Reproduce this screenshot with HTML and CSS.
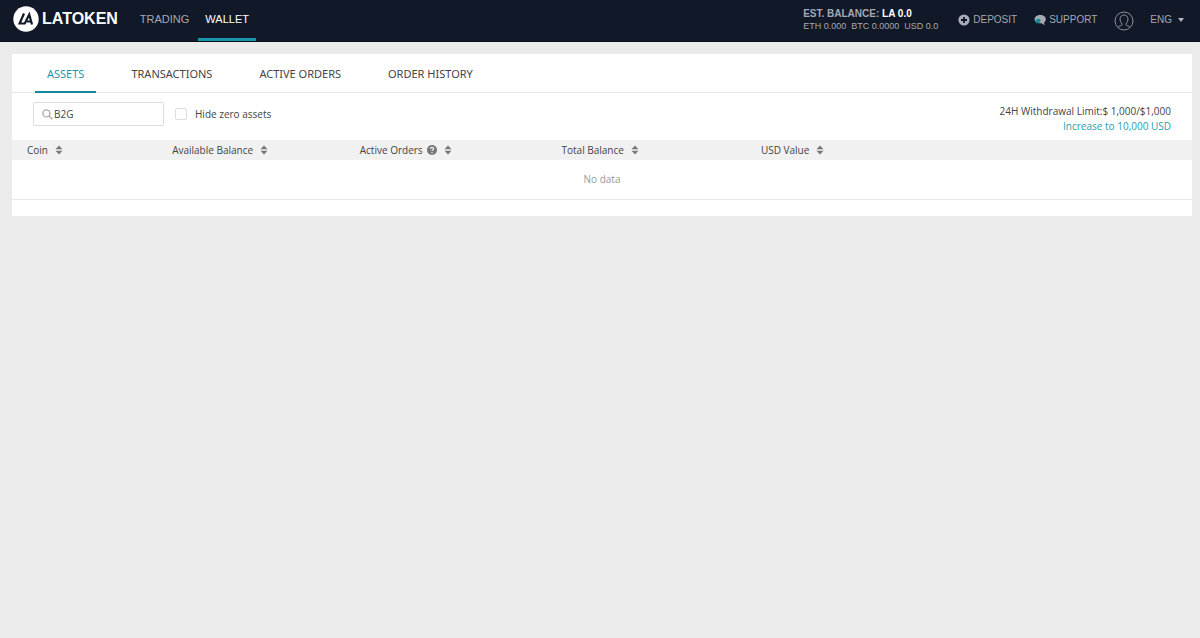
FILE: index.html
```
<!DOCTYPE html>
<html lang="en">

<head>
    <meta charset="UTF-8">
    <meta name="viewport" content="width=device-width, initial-scale=1.0">
    <title>LATOKEN - Wallet</title>
    <link rel="stylesheet" href="styles.css">
</head>

<body>
    <!-- sort arrows, used by every table heading -->
    <svg class="sprite" aria-hidden="true">
        <symbol id="sort" viewBox="0 0 8 10">
            <path d="M4 0.5L7.5 4.3H0.5z M0.5 5.7H7.5L4 9.5z" fill="#777" />
        </symbol>
    </svg>

    <header class="header">
        <a class="logo" href="#">
            <svg width="26" height="26" viewBox="0 0 26 26">
                <circle cx="13" cy="13" r="12.7" fill="#fff" />
                <path d="M11 7.5L6.6 17.5H11.8L16.2 8.5L19 18.5M14 15.5H18" fill="none" stroke="#111827" stroke-width="2.2" />
            </svg>
            <span>LATOKEN</span>
        </a>
        <nav class="nav">
            <a href="#">TRADING</a>
            <a href="#" class="active">WALLET</a>
        </nav>
        <div class="balance">
            <div class="balance-main">EST. BALANCE: <b>LA 0.0</b></div>
            <div class="balance-list"><span>ETH 0.000</span><span>BTC 0.0000</span><span>USD 0.0</span></div>
        </div>
        <a class="header-link deposit" href="#">
            <svg width="12" height="12" viewBox="0 0 12 12">
                <circle cx="6" cy="6" r="5.6" fill="#a9acb7" />
                <path d="M6 3v6M3 6h6" stroke="#111827" stroke-width="1.8" />
            </svg>
            DEPOSIT
        </a>
        <a class="header-link support" href="#">
            <svg width="12" height="12" viewBox="0 0 12 12">
                <path d="M6.2 1C9.5 1 11.8 2.8 11.8 5.2C11.8 6.8 11 8 9.8 8.7L11 11.2L7.4 9.3C3.4 9.7 0.6 7.7 0.6 5.2C0.6 2.8 3 1 6.2 1z" fill="#a9a8b2" />
                <path d="M4.3 4.8a2.3 2.1 0 1 1-1 4L1.6 9.6L2.2 7.9A2.3 2.1 0 0 1 4.3 4.8z" fill="#168b96" />
            </svg>
            SUPPORT
        </a>
        <a class="profile" href="#" aria-label="Profile">
            <svg width="20" height="20" viewBox="0 0 20 20" fill="none" stroke="#8c909b">
                <circle cx="10" cy="10" r="9" />
                <path d="M4 16.2C5 14.6 8.3 15 8.3 13.2C5.2 10.5 5 4 10 4S14.8 10.5 11.7 13.2C11.7 15 15 14.6 16 16.2" />
            </svg>
        </a>
        <button class="lang" type="button">ENG
            <svg width="6" height="4" viewBox="0 0 6 4"><path d="M0 0H6L3 4z" fill="#b5b8c0" /></svg>
        </button>
    </header>

    <main class="wallet">
        <nav class="tabs">
            <a href="#" class="active">ASSETS</a>
            <a href="#">TRANSACTIONS</a>
            <a href="#">ACTIVE ORDERS</a>
            <a href="#">ORDER HISTORY</a>
        </nav>

        <div class="filter">
            <div class="search">
                <svg width="11" height="11" viewBox="0 0 11 11" fill="none" stroke="#aaa" stroke-width="1.4">
                    <circle cx="4.4" cy="4.4" r="3.5" />
                    <path d="M7 7L10.4 10.2" />
                </svg>
                <input type="text" value="B2G" aria-label="Search coin">
            </div>
            <label class="hide-zero"><input type="checkbox"> Hide zero assets</label>
            <div class="limit">
                <div>24H Withdrawal Limit:$ 1,000/$1,000</div>
                <a href="#">Increase to 10,000 USD</a>
            </div>
        </div>

        <table class="assets">
            <colgroup>
                <col class="col-coin">
                <col class="col-available">
                <col class="col-orders">
                <col class="col-total">
                <col>
            </colgroup>
            <thead>
                <tr>
                    <th>Coin <svg class="sort"><use href="#sort" /></svg></th>
                    <th>Available Balance <svg class="sort"><use href="#sort" /></svg></th>
                    <th>Active Orders
                        <svg class="help" viewBox="0 0 10 10">
                            <circle cx="5" cy="5" r="5" fill="#777" />
                            <path d="M3.4 3.9C3.4 1.9 6.7 2 6.6 3.9C6.5 4.9 5 4.8 5 6M5 7V8.2" fill="none" stroke="#f1f1f1" stroke-width="1.2" />
                        </svg>
                        <svg class="sort"><use href="#sort" /></svg>
                    </th>
                    <th>Total Balance <svg class="sort"><use href="#sort" /></svg></th>
                    <th>USD Value <svg class="sort"><use href="#sort" /></svg></th>
                </tr>
            </thead>
            <tbody>
                <tr>
                    <td colspan="5">No data</td>
                </tr>
            </tbody>
        </table>
    </main>
</body>

</html>
```
FILE: styles.css
```
* {
    box-sizing: border-box;
}

body {
    margin: 0;
    background: #ebebeb;
    color: #444;
    font-family: "Open Sans", "Noto Sans", sans-serif;
    font-size: 10px;
}

a {
    color: inherit;
    text-decoration: none;
}

svg {
    flex: none;
}

.sprite {
    display: none;
}

/* header */
.header {
    display: flex;
    align-items: center;
    height: 42px;
    padding: 0 16px 0 13px;
    background: #111827;
    border-bottom: 1px solid #090e1a;
    color: #a5a8b3;
    font-family: "Liberation Sans", sans-serif;
}

.logo {
    display: flex;
    align-items: center;
    gap: 3px;
    padding-bottom: 3px;
    color: #fff;
    font-size: 16px;
    font-weight: bold;
    line-height: 20px;
}

.nav {
    display: flex;
    gap: 2px;
    align-self: stretch;
    margin-left: 15px;
    font-size: 11px;
    line-height: 39px;
}

.nav a {
    padding: 0 7px;
    border-bottom: 3px solid transparent;
}

.nav a.active {
    color: #fff;
    border-color: #1597a8;
}

.balance {
    margin-left: auto;
    padding-bottom: 2px;
}

.balance-main {
    font-weight: bold;
    line-height: 13px;
}

.balance-main b {
    color: #fff;
}

.balance-list {
    display: flex;
    gap: 5px;
    font-size: 9px;
    line-height: 12px;
}

.header-link {
    display: flex;
    align-items: center;
    gap: 3px;
    padding-bottom: 2px;
}

.deposit {
    margin-left: 20px;
}

.support {
    margin-left: 17px;
}

.profile {
    display: flex;
    margin-left: 17px;
}

.lang {
    display: flex;
    align-items: center;
    gap: 6px;
    margin-left: 16px;
    padding: 0 0 2px;
    border: 0;
    background: none;
    color: inherit;
    font: inherit;
    cursor: pointer;
}

/* wallet */
.wallet {
    margin: 12px 8px 0 12px;
    padding-bottom: 16px;
    background: #fff;
}

.tabs {
    display: flex;
    gap: 23px;
    padding-left: 23px;
    border-bottom: 1px solid #e8e8e8;
    font-family: "Noto Sans", sans-serif;
    font-size: 11px;
    line-height: 40px;
}

.tabs a {
    height: 39px;
    margin-bottom: -1px;
    padding: 0 12px;
}

.tabs a.active {
    color: #1a98a6;
    border-bottom: 2px solid #1286a0;
}

.filter {
    display: flex;
    align-items: center;
    height: 47px;
    padding: 0 21px;
}

.search {
    display: flex;
    align-items: center;
    gap: 1px;
    width: 131px;
    height: 24px;
    margin-bottom: 5px;
    padding: 0 8px;
    border: 1px solid #ddd;
    border-radius: 2px;
}

.search input {
    width: 100%;
    padding: 0;
    border: 0;
    outline: 0;
    color: #444;
    font: inherit;
}

.hide-zero {
    display: flex;
    align-items: center;
    gap: 8px;
    margin: 0 auto 5px 11px;
}

.hide-zero input {
    appearance: none;
    width: 12px;
    height: 12px;
    margin: 0;
    border: 1px solid #ddd;
    border-radius: 2px;
    background: #fff;
}

.limit {
    padding-top: 4px;
    line-height: 15px;
    text-align: right;
}

.limit a {
    color: #27a0ad;
}

/* table */
.assets {
    width: 100%;
    table-layout: fixed;
    border-collapse: collapse;
}

.col-coin {
    width: 12.3%;
}

.col-available {
    width: 15.9%;
}

.col-orders {
    width: 17.1%;
}

.col-total {
    width: 16.9%;
}

.assets th {
    height: 20px;
    padding: 0 15px;
    background: #f1f1f1;
    font-weight: 500;
    text-align: left;
    white-space: nowrap;
}

.assets td {
    height: 39px;
    padding: 0;
    border-bottom: 1px solid #e8e8e8;
    color: #999;
    text-align: center;
}

.sort {
    width: 8px;
    height: 10px;
    margin-left: 4px;
    vertical-align: -1px;
}

.help {
    width: 10px;
    height: 10px;
    margin-left: 2px;
    vertical-align: -1px;
}
```
